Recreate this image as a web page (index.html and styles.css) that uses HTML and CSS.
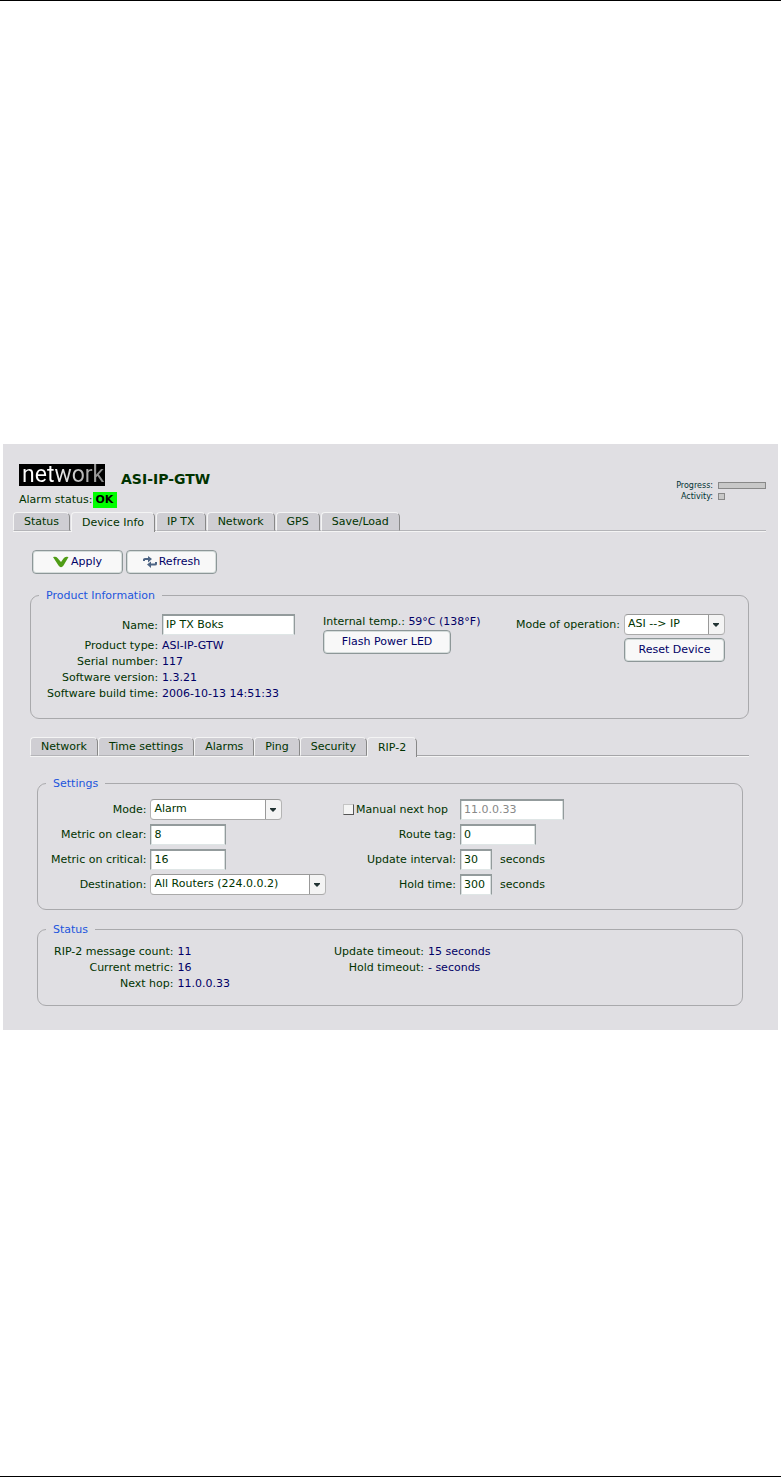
FILE: index.html
```
<!DOCTYPE html>
<html lang="en">
<head>
  <meta charset="UTF-8">
  <meta name="viewport" content="width=device-width, initial-scale=1.0">
  <title>ASI-IP-GTW</title>
  <link rel="stylesheet" href="styles.css">
</head>
<body>
  <div class="panel">
    <div class="header">
      <div>
        <div class="brand">
          <div class="logo"><span>network</span></div>
          <h1>ASI-IP-GTW</h1>
        </div>
        <div class="alarm">Alarm status: <b class="ok">OK</b></div>
      </div>
      <div class="meters">
        <span>Progress:</span><span class="bar"></span>
        <span>Activity:</span><span class="led"></span>
      </div>
    </div>

    <div class="tabs">
      <button type="button">Status</button>
      <button type="button" class="active">Device Info</button>
      <button type="button">IP TX</button>
      <button type="button">Network</button>
      <button type="button">GPS</button>
      <button type="button">Save/Load</button>
    </div>

    <div class="page">
      <div class="toolbar">
        <button type="button" class="btn">
          <svg width="16" height="12" viewBox="0 0 16 12"><path d="M0 1Q3 0 4.500 2L8 6 10.500 2.500Q12 0 15.500 1L10.500 9.500Q8 13 5.500 9.500Z" fill="#4f9c16"/></svg>Apply
        </button>
        <button type="button" class="btn">
          <svg width="14" height="12" viewBox="0 0 14 12"><path d="M0 5V3.500Q0 2 2 2H5V0L9 3 5 6.500V4H2V5ZM14 6V8Q14 9.500 12 9.500H8V12L4 8.500 8 5.500V7.500H12V6Z" fill="#4d6484"/></svg>Refresh
        </button>
      </div>

      <fieldset class="product">
        <legend>Product Information</legend>
        <div class="pairs">
          <label for="name">Name:</label><input type="text" id="name" class="w-name" value="IP TX Boks">
          <span>Product type:</span><span class="val">ASI-IP-GTW</span>
          <span>Serial number:</span><span class="val">117</span>
          <span>Software version:</span><span class="val">1.3.21</span>
          <span>Software build time:</span><span class="val">2006-10-13 14:51:33</span>
        </div>
        <div class="temp">
          <div>Internal temp.: <span class="val">59°C (138°F)</span></div>
          <button type="button" class="btn wide">Flash Power LED</button>
        </div>
        <div class="operation">
          <label for="operation">Mode of operation:</label>
          <select id="operation"><option>ASI --&gt; IP</option></select>
          <button type="button" class="btn">Reset Device</button>
        </div>
      </fieldset>

      <div class="tabs sub">
        <button type="button">Network</button>
        <button type="button">Time settings</button>
        <button type="button">Alarms</button>
        <button type="button">Ping</button>
        <button type="button">Security</button>
        <button type="button" class="active">RIP-2</button>
      </div>

      <div class="subpage">
        <fieldset class="settings">
          <legend>Settings</legend>
          <div class="form">
            <label for="mode">Mode:</label>
            <select id="mode" class="w-mode"><option>Alarm</option></select>
            <label for="clear">Metric on clear:</label>
            <input type="text" id="clear" class="w-metric" value="8">
            <label for="critical">Metric on critical:</label>
            <input type="text" id="critical" class="w-metric" value="16">
            <label for="dest">Destination:</label>
            <select id="dest" class="w-dest"><option>All Routers (224.0.0.2)</option></select>
          </div>
          <div class="form">
            <span class="check"><input type="checkbox" id="manual"><label for="manual">Manual next hop</label></span>
            <input type="text" class="w-hop" value="11.0.0.33" aria-label="Next hop address" disabled>
            <label for="tag">Route tag:</label>
            <input type="text" id="tag" class="w-metric" value="0">
            <label for="interval">Update interval:</label>
            <span class="unit"><input type="text" id="interval" class="w-sec" value="30">seconds</span>
            <label for="hold">Hold time:</label>
            <span class="unit"><input type="text" id="hold" class="w-sec" value="300">seconds</span>
          </div>
        </fieldset>

        <fieldset class="status">
          <legend>Status</legend>
          <div class="pairs">
            <span>RIP-2 message count:</span><span class="val">11</span>
            <span>Current metric:</span><span class="val">16</span>
            <span>Next hop:</span><span class="val">11.0.0.33</span>
          </div>
          <div class="pairs">
            <span>Update timeout:</span><span class="val">15 seconds</span>
            <span>Hold timeout:</span><span class="val">- seconds</span>
          </div>
        </fieldset>
      </div>
    </div>
  </div>
</body>
</html>
```
FILE: styles.css
```
*{ box-sizing: border-box;}
body{ margin: 0; min-height: 100vh; padding: 443px 3px 0; background-color: #fff; border-top: 1px solid #000; border-bottom: 1px solid #000;
  font-family: "DejaVu Sans", Verdana, sans-serif; font-size: 11px; line-height: 16px; color: #030;}
button, input, select{ font: inherit; color: inherit; margin: 0;}
.panel{ background-color: #e0dfe3; padding: 20px 12px 24px 10px;}

.header{ display: flex; justify-content: space-between; padding-left: 6px;}
.brand{ display: flex; align-items: center; gap: 16px; height: 22px;}
.brand h1{ margin: 8px 0 0; font-size: 14px; line-height: 16px;}
.logo{ width: 86px; height: 22px; padding-left: 3px; background-color: #000; font-family: Roboto, sans-serif; font-size: 23px; line-height: 21px;}
.logo span{ background: linear-gradient(to right, #fff 35%, #888); background-clip: text; -webkit-background-clip: text; color: transparent;}
.alarm{ display: flex; gap: 1px; margin: 6px 0 4px;}
.ok{ width: 24px; padding-left: 2px; background-color: #0f0; color: #000;}
.meters{ display: grid; grid-template-columns: auto 48px; gap: 0 5px; align-content: start; align-items: center; justify-items: end; padding-top: 16px;
  font-size: 8px; line-height: 11px; color: #033;}
.bar, .led{ height: 7px; width: 48px; border: 1px solid #888; background-color: #c8c8c8;}
.led{ width: 7px; justify-self: start;}

.tabs{ display: flex; gap: 1px; height: 20px; border-bottom: 1px solid #f4f4f4; box-shadow: inset 0 -1px #b4b4b8;}
.tabs button{ height: 19px; padding: 1px 10px 0; line-height: 16px; background-color: #cfced3; border: 1px solid #f4f4f4; border-right-color: #888; border-bottom-color: #b4b4b8; border-radius: 4px 5px 0 0; white-space: nowrap;}
.tabs button.active{ height: 20px; background-color: #e0dfe3; border-bottom: 0;}
.sub{ gap: 0; margin-top: 18px; box-shadow: inset 0 -1px #a5a5a8;}

.page{ padding: 18px 17px 0;}
.toolbar{ display: flex; gap: 3px; margin-bottom: 15px; padding-left: 2px;}
.btn{ display: flex; align-items: center; justify-content: center; gap: 2px; width: 91px; height: 24px; padding: 0; color: #006; background-color: #f8f8f8; border: 1px solid #8d9798; border-radius: 4px; box-shadow: inset 0 0 0 1px #d5dcdb; white-space: nowrap;}
.btn.wide{ width: 128px;}

fieldset{ margin: 0; min-width: 0; border: 1px solid #a9a9ac; border-radius: 9px;}
legend{ margin-left: -8px; padding: 0 7px; line-height: 13px; color: #25d;}
.val{ color: #006;}
.pairs, .form{ display: grid; grid-template-columns: max-content auto; column-gap: 4px; justify-content: start; align-content: start; align-items: center;}
.pairs > :nth-child(odd), .form > :nth-child(odd){ justify-self: end;}
.product{ display: grid; grid-template-columns: 276px 1fr auto; padding: 12px 23px 16px 16px; height: 130px;}
.product .pairs input{ margin-bottom: 3px;}
.operation{ display: grid; grid-template-columns: auto 101px; gap: 3px 4px; align-content: start; align-items: center;}
.operation .btn{ grid-column: 2; width: 100%;}

.subpage{ padding: 20px 6px 0 7px;}
.settings{ display: grid; grid-template-columns: 292px 1fr; padding: 9px 16px 14px 13px;}
.settings legend{ margin-left: -5px;}
.form{ row-gap: 4px;}
.status{ display: grid; grid-template-columns: 280px 1fr; margin-top: 13px; padding: 8px 16px 13px;}

input[type=text], select{ height: 21px; padding: 0 3px 1px; background-color: #fff; border: 1px solid #939b9c; border-radius: 0;}
input[type=text]{ padding-bottom: 2px; border-width: 2px 1px 1px; border-bottom-color: #dfe6e6; box-shadow: inset 1px 0 #d8dede, inset -1px 0 #d8dede;}
input:disabled{ color: #888;}
select{ appearance: none; width: 100%; padding-right: 18px; border-color: #999 #b4b4b4 #aaa; border-radius: 4px;
  background: url("data:image/svg+xml,%3Csvg xmlns='http://www.w3.org/2000/svg' width='16' height='19'%3E%3Cpath d='M0 0h16v19H0z' fill='%23f4f4f4'/%3E%3Cpath d='M0 0h1v19H0z' fill='%23999'/%3E%3Cpath d='M5 8h6v1l-3 3-3-3z' fill='%23233'/%3E%3C/svg%3E") right center no-repeat #fff;}
.w-name{ width: 133px;}
.w-mode{ width: 132px;}
.w-metric{ width: 76px;}
.w-dest{ width: 176px;}
.w-hop{ width: 104px;}
.w-sec{ width: 32px;}
.unit{ display: flex; align-items: center; gap: 8px;}
.check{ display: flex; align-items: center; gap: 2px; padding-right: 8px;}
.check input{ appearance: none; width: 11px; height: 11px; background-color: #f4f4f4; border: 1px solid #c4c4c4; border-right-color: #555; border-bottom-color: #555;}
```
